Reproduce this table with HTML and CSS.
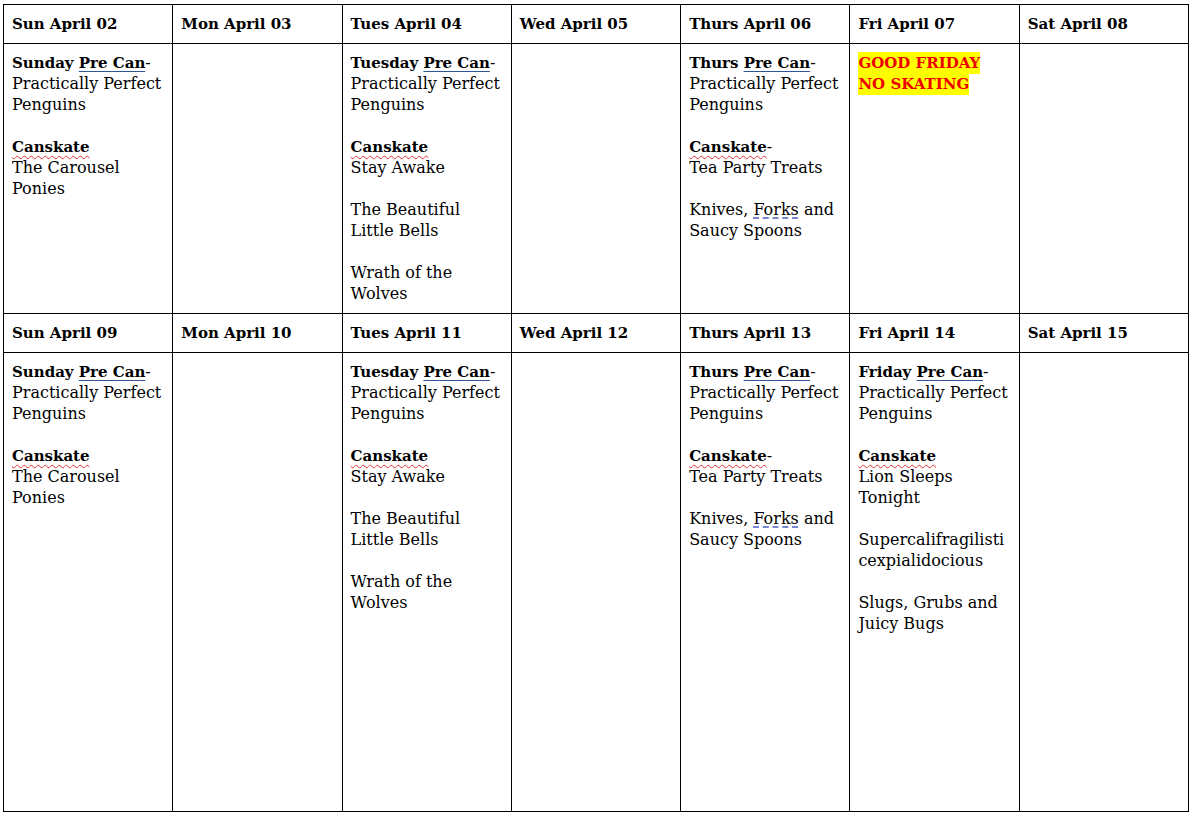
FILE: index.html
```
<!DOCTYPE html>
<html>
<head>
<meta charset="utf-8">
<link rel="stylesheet" href="styles.css">
</head>
<body>
<table class="cal">
  <tr class="head">
    <th>Sun April 02</th><th>Mon April 03</th><th>Tues April 04</th><th>Wed April 05</th><th>Thurs April 06</th><th>Fri April 07</th><th>Sat April 08</th>
  </tr>
  <tr class="week1">
    <td>
      <p><b>Sunday <span class="gram">Pre Can</span></b>-<br>Practically Perfect Penguins</p>
      <p><b class="spell">Canskate</b><br>The Carousel Ponies</p>
    </td>
    <td></td>
    <td>
      <p><b>Tuesday <span class="gram">Pre Can</span></b>-<br>Practically Perfect Penguins</p>
      <p><b class="spell">Canskate</b><br>Stay Awake</p>
      <p>The Beautiful Little Bells</p>
      <p>Wrath of the Wolves</p>
    </td>
    <td></td>
    <td>
      <p><b>Thurs <span class="gram">Pre Can</span></b>-<br>Practically Perfect Penguins</p>
      <p><b class="spell">Canskate</b>-<br>Tea Party Treats</p>
      <p>Knives, <span class="dash">Forks</span> and Saucy Spoons</p>
    </td>
    <td>
      <p><b class="alert">GOOD FRIDAY</b><br><b class="alert">NO SKATING</b></p>
    </td>
    <td></td>
  </tr>
  <tr class="head">
    <th>Sun April 09</th><th>Mon April 10</th><th>Tues April 11</th><th>Wed April 12</th><th>Thurs April 13</th><th>Fri April 14</th><th>Sat April 15</th>
  </tr>
  <tr class="week2">
    <td>
      <p><b>Sunday <span class="gram">Pre Can</span></b>-<br>Practically Perfect Penguins</p>
      <p><b class="spell">Canskate</b><br>The Carousel Ponies</p>
    </td>
    <td></td>
    <td>
      <p><b>Tuesday <span class="gram">Pre Can</span></b>-<br>Practically Perfect Penguins</p>
      <p><b class="spell">Canskate</b><br>Stay Awake</p>
      <p>The Beautiful Little Bells</p>
      <p>Wrath of the Wolves</p>
    </td>
    <td></td>
    <td>
      <p><b>Thurs <span class="gram">Pre Can</span></b>-<br>Practically Perfect Penguins</p>
      <p><b class="spell">Canskate</b>-<br>Tea Party Treats</p>
      <p>Knives, <span class="dash">Forks</span> and Saucy Spoons</p>
    </td>
    <td>
      <p><b>Friday <span class="gram">Pre Can</span></b>-<br>Practically Perfect Penguins</p>
      <p><b class="spell">Canskate</b><br>Lion Sleeps Tonight</p>
      <p class="long">Supercalifragilisticexpialidocious</p>
      <p>Slugs, Grubs and Juicy Bugs</p>
    </td>
    <td></td>
  </tr>
</table>
</body>
</html>
```
FILE: styles.css
```
html, body {
  margin: 0;
  background: #fff;
}
body {
  padding: 4px 0 0 3px;
  font-family: "DejaVu Serif", "Liberation Serif", serif;
  font-size: 16px;
  line-height: 21px;
  color: #000;
}
.cal {
  border-collapse: collapse;
  table-layout: fixed;
  width: 1186px;
}
.cal th, .cal td {
  border: 1px solid #000;
  padding: 0 6px 0 8px;
  text-align: left;
}
.cal th {
  font-weight: bold;
  font-size: 15px;
  vertical-align: middle;
  padding-top: 0;
}
.cal b {
  font-size: 15px;
  line-height: 15px;
}
.cal td {
  vertical-align: top;
  padding-top: 8px;
}
.head {
  height: 39px;
}
.week1 {
  height: 270px;
}
.week2 {
  height: 459px;
}
.cal p {
  margin: 0 0 21px 0;
  line-height: 21px;
}
.cal p:last-child {
  margin-bottom: 0;
}
.gram {
  text-decoration: underline;
  text-decoration-color: #2f5597;
  text-underline-offset: 3px;
}
.spell {
  text-decoration: underline wavy #e03030;
  text-decoration-thickness: 1px;
  text-underline-offset: 3px;
}
.dash {
  text-decoration: underline dashed #4a5fc1;
  text-underline-offset: 3px;
}
.alert {
  color: #ee0000;
  background: #ffff00;
  padding: 2px 0;
}
.long {
  overflow-wrap: anywhere;
}
```
